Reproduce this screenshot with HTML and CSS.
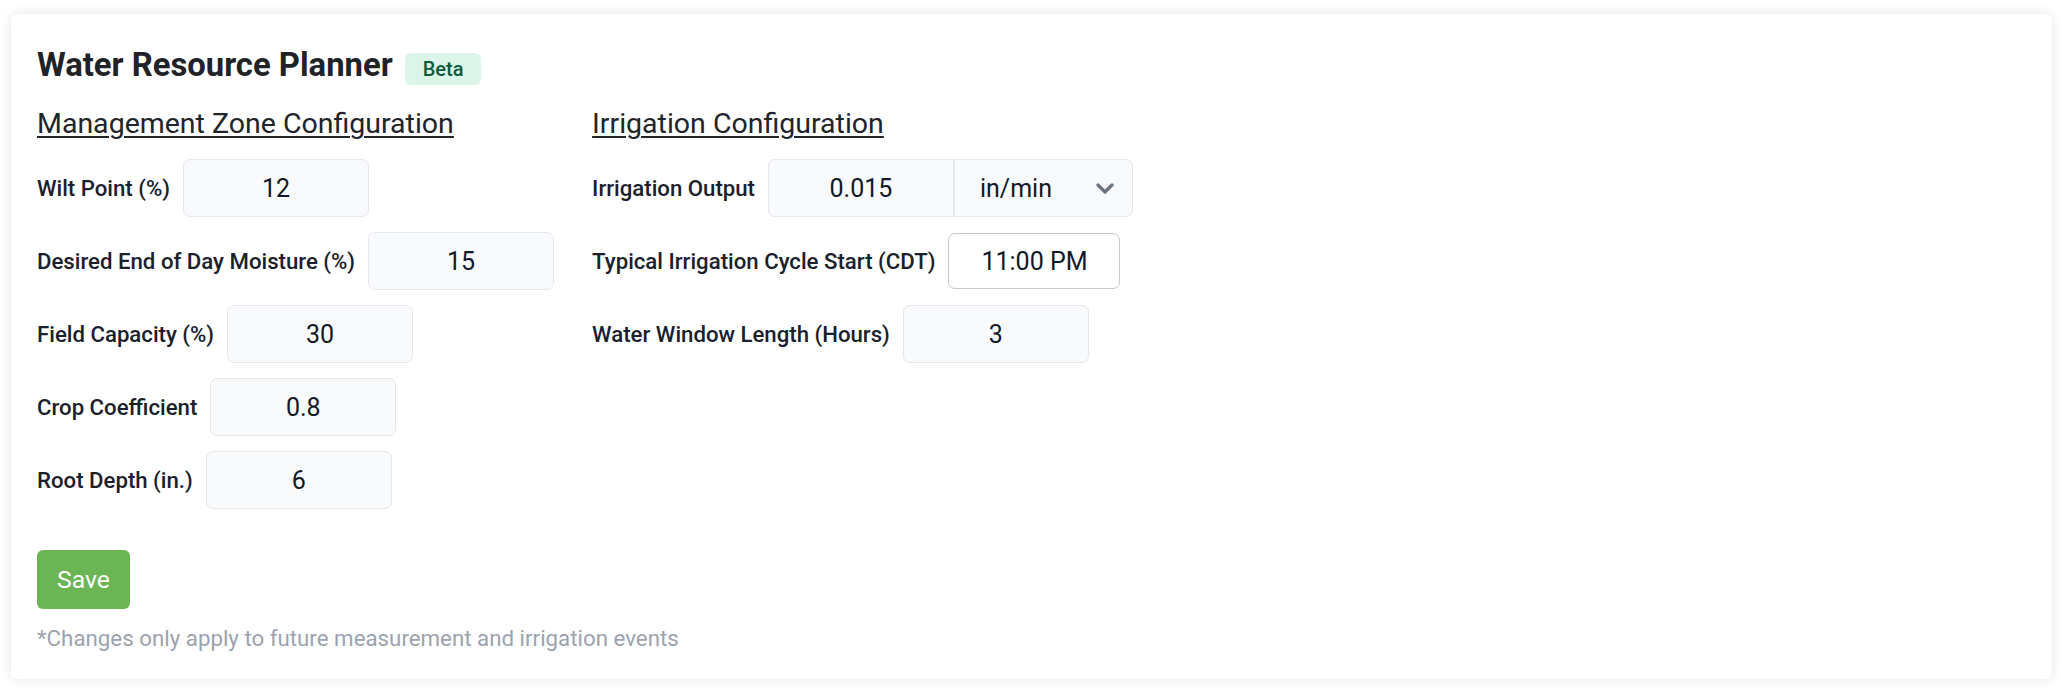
FILE: index.html
```html
<!DOCTYPE html>
<html lang="en">
<head>
<meta charset="utf-8">
<title>Water Resource Planner</title>
<link rel="stylesheet" href="styles.css">
</head>
<body>
<div class="card">
  <div class="header">
    <h1 class="title">Water Resource Planner</h1>
    <span class="badge">Beta</span>
  </div>
  <div class="columns">
    <section class="column">
      <h2 class="section-title">Management Zone Configuration</h2>
      <div class="rows">
        <div class="row"><label class="label">Wilt Point (%)</label><input class="field" type="text" value="12"></div>
        <div class="row"><label class="label">Desired End of Day Moisture (%)</label><input class="field" type="text" value="15"></div>
        <div class="row"><label class="label">Field Capacity (%)</label><input class="field" type="text" value="30"></div>
        <div class="row"><label class="label">Crop Coefficient</label><input class="field" type="text" value="0.8"></div>
        <div class="row"><label class="label">Root Depth (in.)</label><input class="field" type="text" value="6"></div>
      </div>
    </section>
    <section class="column">
      <h2 class="section-title">Irrigation Configuration</h2>
      <div class="rows">
        <div class="row">
          <label class="label">Irrigation Output</label>
          <div class="group">
            <input class="group-field" type="text" value="0.015">
            <div class="select">
              <span>in/min</span>
              <svg class="chevron" width="18" height="11" viewBox="0 0 18 11" aria-hidden="true"><path d="M2 2 L9 9 L16 2" fill="none" stroke="#6b7280" stroke-width="3.2" stroke-linecap="round" stroke-linejoin="round"/></svg>
            </div>
          </div>
        </div>
        <div class="row"><label class="label">Typical Irrigation Cycle Start (CDT)</label><input class="time" type="text" value="11:00 PM"></div>
        <div class="row"><label class="label">Water Window Length (Hours)</label><input class="field" type="text" value="3"></div>
      </div>
    </section>
  </div>
  <button class="save" type="button">Save</button>
  <p class="note">*Changes only apply to future measurement and irrigation events</p>
</div>
</body>
</html>
```

FILE: styles.css
```css
* { box-sizing: border-box; }

html, body {
  margin: 0;
  background: #ffffff;
}

body {
  padding: 14px 10px 12px 11px;
  font-family: Roboto, "Liberation Sans", Arial, sans-serif;
  color: #1f2937;
}

.card {
  background: #ffffff;
  border-radius: 6px;
  box-shadow: 0 0 12px rgba(0, 0, 0, 0.11);
  padding: 33px 26px 29px 26px;
}

.header {
  display: flex;
  align-items: baseline;
  gap: 12px;
}

.title {
  margin: 0;
  font-size: 32.8px;
  line-height: 36px;
  font-weight: 700;
  color: #1f2328;
}

.badge {
  display: inline-block;
  background: #dcf5e9;
  color: #0c5a3b;
  font-size: 20px;
  line-height: 24px;
  font-weight: 500;
  padding: 4px 18px;
  border-radius: 6px;
}

.columns {
  display: flex;
  align-items: flex-start;
  gap: 38px;
  margin-top: 21px;
}

.section-title {
  margin: 0;
  font-size: 28.5px;
  line-height: 36px;
  font-weight: 400;
  color: #212529;
  text-decoration: underline;
  text-decoration-thickness: 1.5px;
  text-underline-offset: 3px;
}

.rows {
  display: flex;
  flex-direction: column;
  gap: 15px;
  margin-top: 17px;
}

.row {
  display: flex;
  align-items: center;
  gap: 13px;
  height: 58px;
}

.label {
  font-size: 22.2px;
  line-height: 26px;
  font-weight: 500;
  color: #1a202c;
  white-space: nowrap;
}

.field,
.group-field,
.time {
  font-family: inherit;
  font-size: 25px;
  color: #111827;
  text-align: center;
  outline: none;
  margin: 0;
}

.field {
  width: 186px;
  height: 58px;
  border: 1px solid #e5e7eb;
  border-radius: 7px;
  background: #f9fafb;
  padding: 0 8px;
}

.group {
  display: flex;
  height: 58px;
  border: 1px solid #e5e7eb;
  border-radius: 7px;
  background: #f9fafb;
  overflow: hidden;
}

.group-field {
  width: 186px;
  height: 100%;
  border: 0;
  border-right: 2px solid #e5e7eb;
  background: transparent;
  padding: 0 8px;
}

.select {
  width: 177px;
  display: flex;
  align-items: center;
  justify-content: space-between;
  padding: 0 18px 0 25px;
  font-size: 25px;
  color: #111827;
}

.chevron {
  display: block;
}

.time {
  width: 172px;
  height: 56px;
  border: 1px solid #c6c9cf;
  border-radius: 7px;
  background: #ffffff;
  padding: 0 4px;
}

.save {
  display: block;
  margin-top: 41px;
  height: 59px;
  padding: 0 20px;
  border: 0;
  border-radius: 6px;
  background: #6cb554;
  color: #ffffff;
  font-family: inherit;
  font-size: 24.75px;
  font-weight: 400;
}

.note {
  margin: 17px 0 0 0;
  font-size: 22.3px;
  line-height: 24px;
  color: #9ca3af;
}
```
